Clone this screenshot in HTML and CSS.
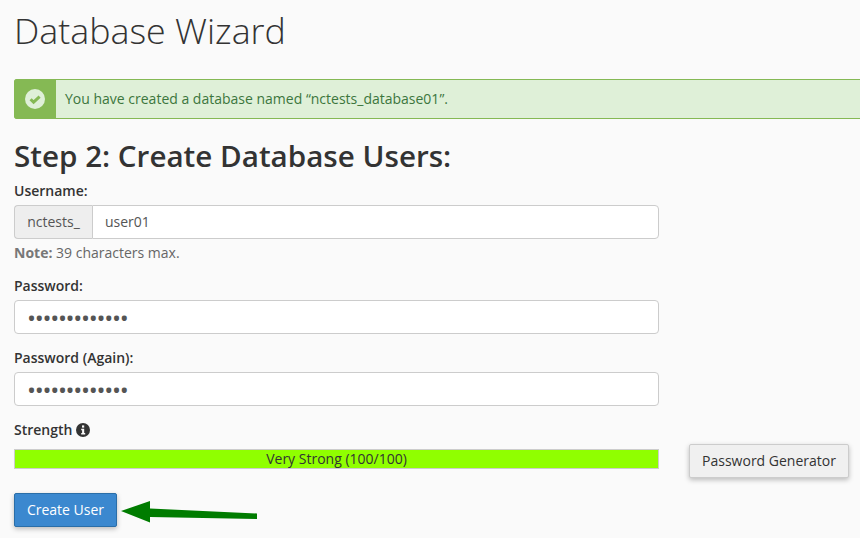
FILE: index.html
```html
<!DOCTYPE html>
<html lang="en">
<head>
<meta charset="utf-8">
<title>Database Wizard</title>
<link rel="stylesheet" href="styles.css">
</head>
<body>
<main class="page">
  <h1 class="title">Database Wizard</h1>
  <div class="alert">
    <div class="alert-icon">
      <svg width="20" height="20" viewBox="0 0 20 20"><circle cx="10" cy="10" r="10" fill="#dff0d8"/><path d="M5.600 10.200 8.600 13.200 14.600 7.600" fill="none" stroke="#85b954" stroke-width="3"/></svg>
    </div>
    <div class="alert-text">You have created a database named “nctests_database01”.</div>
  </div>
  <h2 class="step">Step 2: Create Database Users:</h2>
  <form class="form">
    <label class="label">Username:</label>
    <div class="input-group">
      <span class="addon">nctests_</span>
      <span class="field field-joined">user01</span>
    </div>
    <p class="note"><b>Note:</b> 39 characters max.</p>
    <label class="label">Password:</label>
    <div class="field field-pw">•••••••••••••</div>
    <label class="label label-again">Password (Again):</label>
    <div class="field field-pw">•••••••••••••</div>
    <div class="strength-label">Strength
      <svg class="info" width="14" height="14" viewBox="0 0 14 14"><circle cx="7" cy="7" r="7" fill="#333"/><rect x="6" y="2.400" width="2.200" height="2.200" fill="#fafafa"/><path d="M5.200 5.800H8.200V10H9.200V11.400H5.200V10H6.100V7.200H5.200Z" fill="#fafafa"/></svg>
    </div>
    <div class="strength-row">
      <div class="meter">Very Strong (100/100)</div>
      <button type="button" class="btn btn-default">Password Generator</button>
    </div>
    <div class="submit-row">
      <button type="button" class="btn btn-primary">Create User</button>
    </div>
  </form>
  <svg class="arrow" width="140" height="26" viewBox="0 0 140 26"><path d="M1 11 30 1V8.500L137 13.500V19L30 17V22.500Z" fill="#007c00"/></svg>
</main>
</body>
</html>
```
FILE: styles.css
```css
* { box-sizing: border-box; }
html, body { margin: 0; height: 100%; }
body {
  background: #fafafa;
  color: #333;
  font-family: "Open Sans", sans-serif;
  font-size: 14px;
  overflow: hidden;
}
.page { position: relative; width: 860px; height: 538px; padding-left: 14px; overflow: hidden; }
.title { margin: 0; padding-top: 5px; height: 79px; font-size: 35.800px; line-height: 50px; font-weight: 300; }
.alert {
  display: flex;
  width: 900px;
  height: 40px;
  border: 1px solid #85b954;
  border-radius: 3px;
  background: #dff0d8;
}
.alert-icon {
  flex: none;
  width: 42px;
  display: flex;
  align-items: center;
  justify-content: center;
  background: #85b954;
  margin: -1px 0 -1px -1px;
  border-radius: 3px 0 0 3px;
}
.alert-text { padding-left: 9px; line-height: 38px; color: #3c763d; font-size: 14px; }
.step { margin: 0; height: 62px; padding-top: 18px; font-size: 29.600px; line-height: 38px; font-weight: 600; }
.form { width: 845px; }
.label { display: block; font-weight: 600; font-size: 14px; line-height: 20px; }
.input-group { display: flex; width: 645px; height: 34px; margin-top: 4px; }
.addon {
  flex: none;
  width: 78px;
  border: 1px solid #ccc;
  border-right: 0;
  border-radius: 4px 0 0 4px;
  background: #eee;
  color: #555;
  text-align: center;
  line-height: 32px;
}
.field {
  display: block;
  height: 34px;
  width: 645px;
  border: 1px solid #ccc;
  border-radius: 4px;
  background: #fff;
  color: #555;
  padding: 0 12px;
  line-height: 32px;
}
.field-joined { flex: 1; width: auto; border-radius: 0 4px 4px 0; }
.field-pw { margin-top: 4px; font-size: 24px; line-height: 33px; letter-spacing: -1.300px; }
.note { margin: 4px 0 0; height: 33px; line-height: 20px; color: #666; }
.note b { font-weight: 700; color: #777; }
.label-again { margin-top: 14px; }
.strength-label { margin-top: 14px; height: 20px; line-height: 20px; font-weight: 600; }
.info { vertical-align: -2px; margin-left: 0; }
.strength-row { position: relative; display: flex; margin-top: 9px; height: 20px; }
.meter {
  width: 645px;
  height: 20px;
  border: 1px solid #ccc;
  background: #90ff00;
  text-align: center;
  line-height: 18px;
  font-size: 14px;
}
.btn {
  font-family: inherit;
  font-size: 14px;
  border-radius: 2px;
  height: 34px;
  padding: 0 0 2px;
  white-space: nowrap;
  box-shadow: 0 2px 5px rgba(0,0,0,.25);
}
.btn-default { margin: -5px 0 0 30px; width: 160px; background: #f0f0f0; border: 1px solid #ccc; color: #333; }
.submit-row { margin-top: 24px; }
.btn-primary { width: 103px; background: #3b88cf; border: 1px solid #2a6ea8; color: #fff; }
.arrow { position: absolute; left: 120px; top: 500px; }
```
